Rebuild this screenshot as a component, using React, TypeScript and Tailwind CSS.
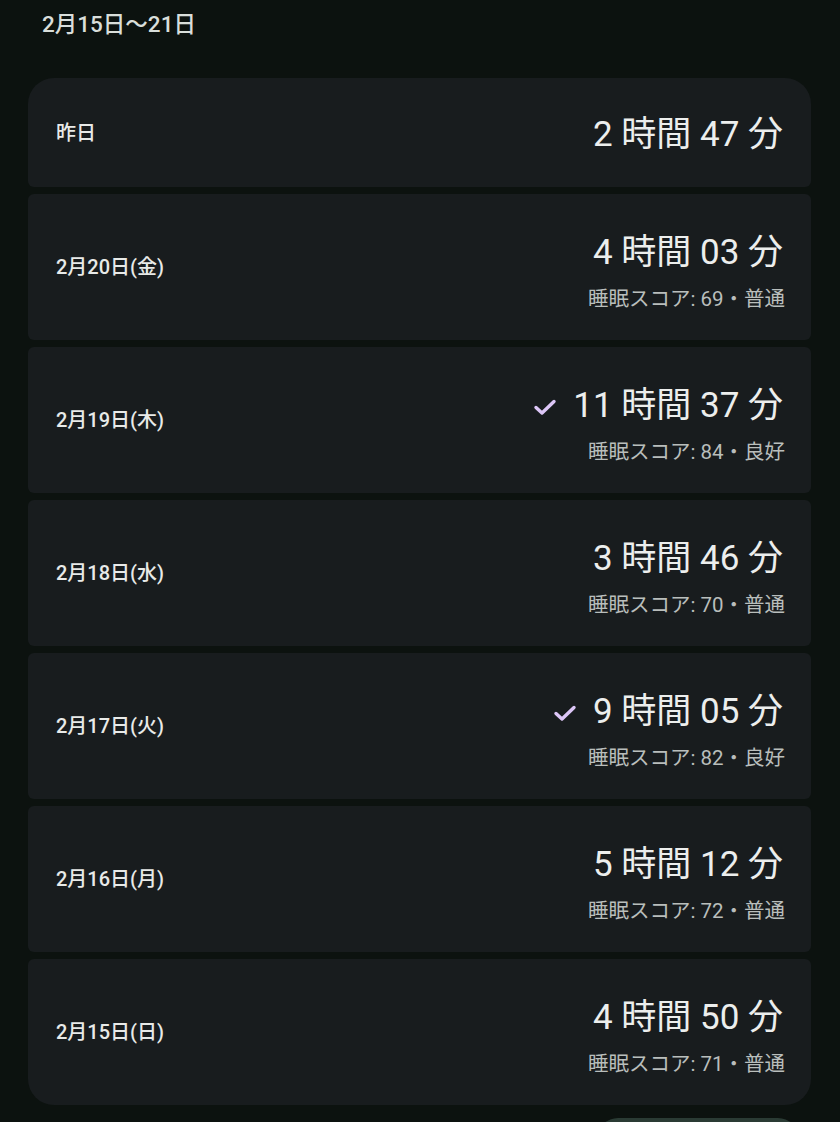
import React from 'react';

interface Night {
  label: string;
  hours: string;
  minutes: string;
  score?: string;
  checked?: boolean;
}

const nights: Night[] = [
  { label: '昨日', hours: '2', minutes: '47' },
  { label: '2月20日(金)', hours: '4', minutes: '03', score: '睡眠スコア: 69・普通' },
  { label: '2月19日(木)', hours: '11', minutes: '37', score: '睡眠スコア: 84・良好', checked: true },
  { label: '2月18日(水)', hours: '3', minutes: '46', score: '睡眠スコア: 70・普通' },
  { label: '2月17日(火)', hours: '9', minutes: '05', score: '睡眠スコア: 82・良好', checked: true },
  { label: '2月16日(月)', hours: '5', minutes: '12', score: '睡眠スコア: 72・普通' },
  { label: '2月15日(日)', hours: '4', minutes: '50', score: '睡眠スコア: 71・普通' },
];

const font = { fontFamily: '"Roboto", "Noto Sans CJK JP", sans-serif' };

const Check = () => (
  <svg width="24" height="24" viewBox="0 0 24 24" className="mr-[16px] mt-[2px]">
    <path d="M3 12.5l6 5.5L21 6.5" fill="none" stroke="#dcc6f7" strokeWidth="3.4" strokeLinecap="round" strokeLinejoin="round" />
  </svg>
);

export default function App() {
  return (
    <div className="min-h-[1122px] w-[840px] bg-[#0c120f] overflow-hidden" style={font}>
      <div className="h-[78px] pl-[42px] pt-[8px]">
        <h2 className="text-[22.5px] font-medium text-[#d9deda] leading-[32px]">2月15日〜21日</h2>
      </div>

      <div className="mx-[28px] w-[783px] flex flex-col gap-[7px]">
        {nights.map((n, i) => {
          const first = i === 0;
          const last = i === nights.length - 1;
          return (
            <div
              key={n.label}
              className={`bg-[#181c1e] flex items-center justify-between pl-[28px] pr-[28px] ${
                first ? 'h-[109px] rounded-t-[26px] rounded-b-[6px]' : last ? 'h-[146px] rounded-t-[6px] rounded-b-[26px]' : 'h-[146px] rounded-[6px]'
              }`}
            >
              <span className="text-[20px] font-medium text-[#e8eae8]">{n.label}</span>
              <div className={`flex flex-col items-end ${n.score ? 'pt-[10px]' : 'pt-[4px]'}`}>
                <div className="flex items-center text-[35px] text-[#eceeed] leading-[40px]">
                  {n.checked && <Check />}
                  <span>{n.hours} 時間 {n.minutes} 分</span>
                </div>
                {n.score && (
                  <span className="mt-[14px] text-[20.5px] text-[#b9bebc] leading-[24px] mr-[-2px]">{n.score}</span>
                )}
              </div>
            </div>
          );
        })}
      </div>

      <div className="flex justify-end pr-[42px] pt-[13px]">
        <div className="w-[200px] h-[40px] rounded-t-[20px] bg-[#2a3b34]" />
      </div>
    </div>
  );
}
